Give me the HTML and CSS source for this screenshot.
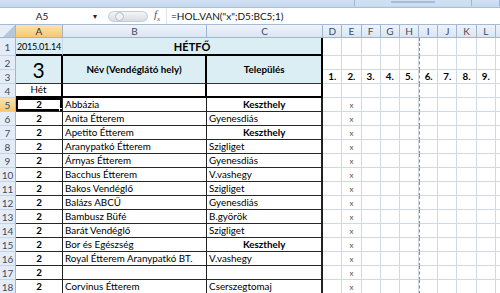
FILE: index.html
```html
<!DOCTYPE html>
<html>
<head>
    <title>HÉTFŐ - Excel</title>
    <link rel="stylesheet" href="styles.css">
</head>
<body>
    <div class="ribbon">
        <div class="group g1"></div>
        <div class="group g2"><span class="label"></span></div>
        <div class="group g3"></div>
    </div>
    <div class="formula-bar">
        <div class="name-box">A5</div>
        <div class="name-arrow">▾</div>
        <div class="grip"><span class="knob"></span></div>
        <div class="fx">f<sub>x</sub></div>
        <div class="formula">=HOL.VAN("x";D5:BC5;1)</div>
    </div>
    <table class="sheet">
        <colgroup>
            <col class="w-rh"><col class="w-a"><col class="w-b"><col class="w-c">
            <col class="w-n"><col class="w-n"><col class="w-n"><col class="w-n"><col class="w-n">
            <col class="w-n"><col class="w-n"><col class="w-n"><col class="w-n"><col class="w-m">
        </colgroup>
        <tr class="col-head">
            <th class="corner"></th>
            <th class="active">A</th><th>B</th><th>C</th>
            <th>D</th><th>E</th><th>F</th><th>G</th><th>H</th>
            <th>I</th><th>J</th><th>K</th><th>L</th><th></th>
        </tr>
        <tr class="row-1">
            <th class="rh">1</th>
            <td class="date blue thick-b">2015.01.14</td>
            <td colspan="2" class="title blue thick-b thick-r">HÉTFŐ</td>
            <td></td><td></td><td></td><td></td><td></td>
            <td class="brk"></td><td></td><td></td><td></td><td></td>
        </tr>
        <tr>
            <th class="rh">2</th>
            <td rowspan="2" class="week blue thick-r dark-b">3</td>
            <td rowspan="2" class="head blue thick-r dark-b">Név (Vendéglátó hely)</td>
            <td rowspan="2" class="head blue thick-r dark-b">Település</td>
            <td></td><td></td><td></td><td></td><td></td>
            <td class="brk"></td><td></td><td></td><td></td><td></td>
        </tr>
        <tr>
            <th class="rh">3</th>
            <td class="num">1.</td><td class="num">2.</td><td class="num">3.</td><td class="num">4.</td><td class="num">5.</td>
            <td class="num brk">6.</td><td class="num">7.</td><td class="num">8.</td><td class="num">9.</td><td></td>
        </tr>
        <tr>
            <th class="rh">4</th>
            <td class="center thick-r thick-b">Hét</td>
            <td class="thick-r thick-b"></td>
            <td class="thick-r thick-b"></td>
            <td></td><td></td><td></td><td></td><td></td>
            <td class="brk"></td><td></td><td></td><td></td><td></td>
        </tr>
        <tr>
            <th class="rh active">5</th>
            <td class="cnt sel">2</td><td class="name">Abbázia</td><td class="town bold">Keszthely</td>
            <td></td><td class="mark">x</td><td></td><td></td><td></td>
            <td class="brk"></td><td></td><td></td><td></td><td></td>
        </tr>
        <tr>
            <th class="rh">6</th>
            <td class="cnt">2</td><td class="name">Anita Étterem</td><td class="town">Gyenesdiás</td>
            <td></td><td class="mark">x</td><td></td><td></td><td></td>
            <td class="brk"></td><td></td><td></td><td></td><td></td>
        </tr>
        <tr>
            <th class="rh">7</th>
            <td class="cnt">2</td><td class="name">Apetito Étterem</td><td class="town bold">Keszthely</td>
            <td></td><td class="mark">x</td><td></td><td></td><td></td>
            <td class="brk"></td><td></td><td></td><td></td><td></td>
        </tr>
        <tr>
            <th class="rh">8</th>
            <td class="cnt">2</td><td class="name">Aranypatkó Étterem</td><td class="town">Szigliget</td>
            <td></td><td class="mark">x</td><td></td><td></td><td></td>
            <td class="brk"></td><td></td><td></td><td></td><td></td>
        </tr>
        <tr>
            <th class="rh">9</th>
            <td class="cnt">2</td><td class="name">Árnyas Étterem</td><td class="town">Gyenesdiás</td>
            <td></td><td class="mark">x</td><td></td><td></td><td></td>
            <td class="brk"></td><td></td><td></td><td></td><td></td>
        </tr>
        <tr>
            <th class="rh">10</th>
            <td class="cnt">2</td><td class="name">Bacchus Étterem</td><td class="town">V.vashegy</td>
            <td></td><td class="mark">x</td><td></td><td></td><td></td>
            <td class="brk"></td><td></td><td></td><td></td><td></td>
        </tr>
        <tr>
            <th class="rh">11</th>
            <td class="cnt">2</td><td class="name">Bakos Vendéglő</td><td class="town">Szigliget</td>
            <td></td><td class="mark">x</td><td></td><td></td><td></td>
            <td class="brk"></td><td></td><td></td><td></td><td></td>
        </tr>
        <tr>
            <th class="rh">12</th>
            <td class="cnt">2</td><td class="name">Balázs ABCŰ</td><td class="town">Gyenesdiás</td>
            <td></td><td class="mark">x</td><td></td><td></td><td></td>
            <td class="brk"></td><td></td><td></td><td></td><td></td>
        </tr>
        <tr>
            <th class="rh">13</th>
            <td class="cnt">2</td><td class="name">Bambusz Büfé</td><td class="town">B.györök</td>
            <td></td><td class="mark">x</td><td></td><td></td><td></td>
            <td class="brk"></td><td></td><td></td><td></td><td></td>
        </tr>
        <tr>
            <th class="rh">14</th>
            <td class="cnt">2</td><td class="name">Barát Vendéglő</td><td class="town">Szigliget</td>
            <td></td><td class="mark">x</td><td></td><td></td><td></td>
            <td class="brk"></td><td></td><td></td><td></td><td></td>
        </tr>
        <tr>
            <th class="rh">15</th>
            <td class="cnt">2</td><td class="name">Bor és Egészség</td><td class="town bold">Keszthely</td>
            <td></td><td class="mark">x</td><td></td><td></td><td></td>
            <td class="brk"></td><td></td><td></td><td></td><td></td>
        </tr>
        <tr>
            <th class="rh">16</th>
            <td class="cnt">2</td><td class="name">Royal Étterem Aranypatkó BT.</td><td class="town">V.vashegy</td>
            <td></td><td class="mark">x</td><td></td><td></td><td></td>
            <td class="brk"></td><td></td><td></td><td></td><td></td>
        </tr>
        <tr>
            <th class="rh">17</th>
            <td class="cnt">2</td><td class="name"></td><td class="town"></td>
            <td></td><td class="mark">x</td><td></td><td></td><td></td>
            <td class="brk"></td><td></td><td></td><td></td><td></td>
        </tr>
        <tr>
            <th class="rh">18</th>
            <td class="cnt">2</td><td class="name">Corvinus Étterem</td><td class="town">Cserszegtomaj</td>
            <td></td><td class="mark">x</td><td></td><td></td><td></td>
            <td class="brk"></td><td></td><td></td><td></td><td></td>
        </tr>
    </table>
</body>
</html>
```

FILE: styles.css
```css
body {
    margin: 0;
    width: 500px;
    height: 293px;
    overflow: hidden;
    background-color: #fff;
    font-family: Lato, "Liberation Sans", sans-serif;
    color: #000;
}

/* Bottom edge of the ribbon */
.ribbon {
    height: 7px;
    display: flex;
    background: linear-gradient(#d3e1f3, #c4d7ee);
    border-bottom: 1px solid #a9c0dc;
}

.group {
    height: 6px;
    border-right: 1px solid #9fb7d6;
}

.g1 { width: 354px; }
.g2 {
    width: 116px;
    background-color: #cfdff2;
    display: flex;
    justify-content: center;
}
.g3 { flex: 1; }

.label {
    width: 44px;
    height: 2px;
    margin-top: 1px;
    background-color: #a7bcd8;
}

/* Name box and formula bar */
.formula-bar {
    height: 16px;
    display: flex;
    align-items: center;
    background-color: #fff;
    border-bottom: 1px solid #a5bad6;
    font-size: 10px;
}

.name-box {
    width: 84px;
    text-align: center;
    color: #222;
}

.name-arrow {
    width: 22px;
    font-size: 8px;
    color: #222;
    text-align: center;
}

.grip {
    width: 40px;
    height: 11px;
    margin-left: 2px;
    border-radius: 6px;
    background: linear-gradient(#f3f5f8, #d8dde4);
    border: 1px solid #c5ccd6;
    box-sizing: border-box;
    display: flex;
    align-items: center;
}

.knob {
    width: 7px;
    height: 7px;
    margin-left: 6px;
    border-radius: 50%;
    border: 1px solid #b6bec9;
    background-color: #eef1f5;
}

.fx {
    width: 18px;
    text-align: center;
    font-family: "Liberation Serif", serif;
    font-style: italic;
    font-size: 11px;
    color: #555;
}

.fx sub {
    font-size: 7px;
}

.formula {
    flex: 1;
    height: 16px;
    line-height: 16px;
    padding-left: 4px;
    border-left: 1px solid #dbe3ee;
    color: #111;
}

/* Worksheet grid */
.sheet {
    table-layout: fixed;
    border-collapse: separate;
    border-spacing: 0;
    width: 506px;
    font-size: 9.8px;
    line-height: 1;
}

.w-rh { width: 16px; }
.w-a { width: 47px; }
.w-b { width: 144px; }
.w-c { width: 116px; }
.w-n { width: 19.2px; }
.w-m { width: 10px; }

.sheet tr {
    height: 14px;
}

.sheet tr.col-head {
    height: 13px;
}

.sheet tr.row-1 {
    height: 18px;
}

.sheet td {
    padding: 0 2px;
    border-right: 1px solid #d0d7e5;
    border-bottom: 1px solid #d0d7e5;
    white-space: nowrap;
    overflow: hidden;
    vertical-align: middle;
}

.col-head th {
    font-weight: normal;
    font-size: 10px;
    color: #3d4b5e;
    background: linear-gradient(#eef3fa, #dbe5f1);
    border-right: 1px solid #9eb6ce;
    border-bottom: 1px solid #9eb6ce;
    padding: 0;
}

.col-head th.active {
    background: linear-gradient(#fbe3b3, #f6c86e);
    color: #3a3020;
}

.col-head th.corner {
    background: linear-gradient(135deg, #e6edf6 55%, #b7c6d8 56%);
}

th.rh {
    font-weight: normal;
    font-size: 10px;
    color: #3d4b5e;
    background-color: #e4ecf7;
    border-right: 1px solid #9eb6ce;
    border-bottom: 1px solid #c5d3e5;
    text-align: center;
    padding: 0;
}

th.rh.active {
    background: linear-gradient(#fbe3b3, #f6c86e);
}

/* Header block A1:C4 */
.blue {
    background-color: #dbeef3;
}

.sheet td.date {
    font-size: 9px;
    padding: 0 0 0 1px;
    letter-spacing: -0.2px;
}

.title {
    text-align: center;
    font-weight: bold;
    font-size: 11px;
}

.week {
    text-align: center;
    font-size: 21px;
    padding-top: 3px;
}

.head {
    text-align: center;
    font-weight: bold;
}

.num {
    text-align: center;
    font-weight: bold;
    padding: 0;
}

.center {
    text-align: center;
}

.sheet td.thick-b {
    border-bottom: 2px solid #000;
}

.sheet td.thick-r {
    border-right: 2px solid #000;
}

.sheet td.dark-b {
    border-bottom: 1px solid #333;
}

/* Data rows */
.sheet td.cnt,
.sheet td.name {
    border-right: 1px solid #222;
    border-bottom: 1px solid #262626;
}

.sheet td.town {
    border-right: 2px solid #222;
    border-bottom: 1px solid #262626;
}

.cnt {
    text-align: center;
    font-weight: bold;
}

.town.bold {
    text-align: center;
    font-weight: bold;
}

.mark {
    text-align: center;
    font-size: 8px;
    color: #555;
    padding: 0;
}

/* Page break line between H and I */
.sheet td.brk {
    border-left: 1px dashed #8a8a8a;
}

/* Active cell */
.sheet td.sel {
    position: relative;
    box-shadow: inset 0 0 0 2px #000;
}

.sel::after {
    content: "";
    position: absolute;
    right: -3px;
    bottom: -3px;
    width: 4px;
    height: 4px;
    background-color: #000;
    border: 1px solid #fff;
}
```
